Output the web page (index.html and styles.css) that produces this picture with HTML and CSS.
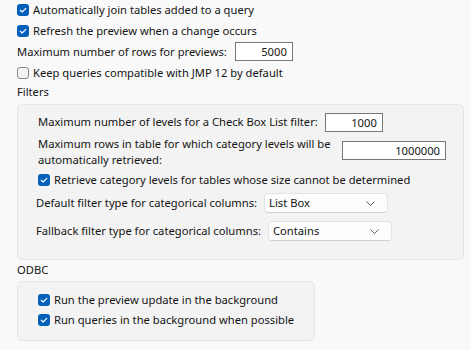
FILE: index.html
```html
<!DOCTYPE html>
<html>
<head>
<meta charset="utf-8">
<link rel="stylesheet" href="styles.css">
</head>
<body>
<div class="page">
  <div class="row r1"><span class="cb on"><svg width="12" height="12" viewBox="0 0 12 12"><path d="M3.2 6.1 L5.1 8 L8.8 4.3" fill="none" stroke="#fff" stroke-width="1.2" stroke-linecap="round" stroke-linejoin="round"/></svg></span><span>Automatically join tables added to a query</span></div>
  <div class="row r2"><span class="cb on"><svg width="12" height="12" viewBox="0 0 12 12"><path d="M3.2 6.1 L5.1 8 L8.8 4.3" fill="none" stroke="#fff" stroke-width="1.2" stroke-linecap="round" stroke-linejoin="round"/></svg></span><span>Refresh the preview when a change occurs</span></div>
  <div class="row r3"><span>Maximum number of rows for previews:</span><span class="num gap11">5000</span></div>
  <div class="row r4"><span class="cb"></span><span>Keep queries compatible with JMP 12 by default</span></div>
  <div class="heading h-filters">Filters</div>
  <div class="panel filters">
    <div class="row f1"><span>Maximum number of levels for a Check Box List filter:</span><span class="num gap7">1000</span></div>
    <div class="row f2"><span class="wrap-label">Maximum rows in table for which category levels will be automatically retrieved:</span><span class="num wide">1000000</span></div>
    <div class="row f3"><span class="cb on"><svg width="12" height="12" viewBox="0 0 12 12"><path d="M3.2 6.1 L5.1 8 L8.8 4.3" fill="none" stroke="#fff" stroke-width="1.2" stroke-linecap="round" stroke-linejoin="round"/></svg></span><span>Retrieve category levels for tables whose size cannot be determined</span></div>
    <div class="row f4"><span>Default filter type for categorical columns:</span><span class="select"><span>List Box</span><svg width="9" height="5" viewBox="0 0 9 5"><path d="M0.5 0.5 L4.5 4.5 L8.5 0.5" fill="none" stroke="#5f5f5f" stroke-width="1"/></svg></span></div>
    <div class="row f5"><span>Fallback filter type for categorical columns:</span><span class="select"><span>Contains</span><svg width="9" height="5" viewBox="0 0 9 5"><path d="M0.5 0.5 L4.5 4.5 L8.5 0.5" fill="none" stroke="#5f5f5f" stroke-width="1"/></svg></span></div>
  </div>
  <div class="heading h-odbc">ODBC</div>
  <div class="panel odbc">
    <div class="row o1"><span class="cb on"><svg width="12" height="12" viewBox="0 0 12 12"><path d="M3.2 6.1 L5.1 8 L8.8 4.3" fill="none" stroke="#fff" stroke-width="1.2" stroke-linecap="round" stroke-linejoin="round"/></svg></span><span>Run the preview update in the background</span></div>
    <div class="row o1"><span class="cb on"><svg width="12" height="12" viewBox="0 0 12 12"><path d="M3.2 6.1 L5.1 8 L8.8 4.3" fill="none" stroke="#fff" stroke-width="1.2" stroke-linecap="round" stroke-linejoin="round"/></svg></span><span>Run queries in the background when possible</span></div>
  </div>
</div>
</body>
</html>
```

FILE: styles.css
```css
html, body {
  margin: 0;
  background: #f9f9f9;
}
body {
  font-family: "Noto Sans", "Open Sans", sans-serif;
  font-size: 11.2px;
  line-height: 16px;
  color: #141414;
}
.page {
  padding-left: 17px;
}
.row {
  display: flex;
  align-items: center;
  white-space: nowrap;
}
.r1 { height: 20px; }
.r2 { height: 21px; }
.r3 { height: 21px; }
.r4 { height: 22px; }

.cb {
  width: 12px;
  height: 12px;
  box-sizing: border-box;
  border-radius: 3px;
  border: 1px solid #8a8a8a;
  background: #f4f4f4;
  margin-right: 4px;
  flex: none;
  display: flex;
}
.cb.on {
  border: none;
  background: #005fb8;
}
.cb svg { display: block; }

.num {
  width: 58px;
  height: 19px;
  box-sizing: border-box;
  border: 1px solid #777777;
  background: #ffffff;
  text-align: right;
  padding-right: 5px;
  line-height: 17px;
  flex: none;
}
.gap11 { margin-left: 8px; }
.gap7 { margin-left: 7px; }

.heading {
  height: 16px;
  line-height: 16px;
}
.h-filters { margin-top: 0; }
.h-odbc { margin-top: 2px; }

.panel {
  background: #f3f3f3;
  border: 1px solid #e5e5e5;
  border-radius: 5px;
  box-sizing: border-box;
}
.filters {
  width: 447px;
  margin-top: 4px;
  padding: 7px 0 18px 20px;
}
.f1 { height: 20px; }
.f2 {
  margin-top: 4px;
  align-items: flex-start;
  white-space: normal;
}
.wrap-label { width: 298px; }
.num.wide {
  width: 104px;
  margin-left: 6px;
  margin-top: 5px;
}
.f3 { margin-top: 4px; height: 16px; }
.f4 { margin-top: 5px; height: 20px; margin-left: -2px; }
.f5 { margin-top: 8px; height: 20px; margin-left: -2px; }

.select {
  margin-left: 7px;
  width: 124px;
  height: 20px;
  box-sizing: border-box;
  border: 1px solid #e3e3e3;
  border-bottom-color: #d2d2d2;
  border-radius: 4px;
  background: #fdfdfd;
  display: flex;
  align-items: center;
  justify-content: space-between;
  padding: 0 12px 0 4px;
  flex: none;
}
.select svg { display: block; }

.odbc {
  width: 298px;
  margin-top: 3px;
  padding: 8px 0 10px 20px;
}
.o1 { height: 20px; }
```
